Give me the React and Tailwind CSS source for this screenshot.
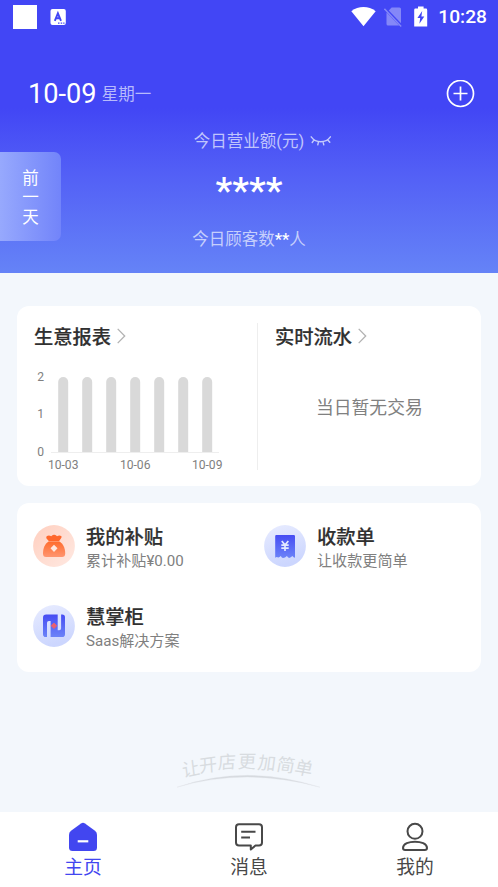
import React from 'react';

function StatusBar() {
  return (
    <div className="flex h-[34px] items-center justify-between pl-[13px] pr-[11px] text-white">
      <div className="flex items-center gap-[13px]">
        <div className="h-6 w-6 bg-white" />
        <svg width="17" height="17" viewBox="0 0 17 17">
          <rect x="0.5" y="0" width="15.3" height="16" rx="2" fill="#fff" />
          <path d="M4.8 11.8 7.9 4.3 11 11.8M5.8 9.2H10" fill="none" stroke="#4246f5" strokeWidth="1.9" />
          <path d="M8 14.2h1.5M10.7 14.2h1.5M13.2 14.2h1.3" stroke="#4246f5" strokeWidth="1.2" />
        </svg>
      </div>
      <div className="flex items-center">
        <svg width="25" height="20" viewBox="0 0 25 20">
          <path d="M12.5 19.3.3 4.3Q5.8.1 12.5.1T24.7 4.3Z" fill="#fff" />
        </svg>
        <svg className="ml-2" width="18" height="20" viewBox="0 0 18 20">
          <path d="M7.6.5H15.5Q17 .5 17 2V17Q17 18.5 15.5 18.5H4Q2.5 18.5 2.5 17V6Z" fill="#8487f8" />
          <path d="M.6 1.2 17.4 18.8" stroke="#4246f5" strokeWidth="3" />
          <path d="M.4 1.8 17.2 19.4" stroke="#8487f8" strokeWidth="1.4" />
        </svg>
        <svg className="-mt-[1px] ml-3" width="14" height="21" viewBox="0 0 14 21">
          <path d="M4 .5H9.6V2.6H12Q13.2 2.6 13.2 4V20.5H.2V4Q.2 2.6 1.4 2.6H4Z" fill="#fff" />
          <path d="M8.2 5 3.4 12H6.2L5.4 17.8 10.3 10.4H7.4Z" fill="#4246f5" />
        </svg>
        <span className="ml-[10px] text-[19.2px] leading-5 font-medium">10:28</span>
      </div>
    </div>
  );
}

function ClosedEye() {
  return (
    <svg width="22" height="12" viewBox="0 0 22 12" fill="none" stroke="#c5cbfc" strokeWidth="1.4" strokeLinecap="round">
      <path d="M1.2 1.8Q4.8 6.7 10.8 6.7T20.4 1.8M4.1 4.8 2.2 7.5M8.5 6.6 7.8 9.9M13 6.6 13.8 9.9M17.5 4.7 19.8 7.3" />
    </svg>
  );
}

function Header() {
  return (
    <header className="relative h-[273px] bg-[linear-gradient(180deg,#4246f5_0px,#4246f5_108px,#5360f6_175px,#6583f7_273px)]">
      <StatusBar />
      <div className="mt-[42px] flex h-9 items-center justify-between pl-7 pr-[23px]">
        <div className="flex items-center gap-[5px]">
          <span className="text-[27.2px] leading-9 text-white">10-09</span>
          <span className="pt-[1px] text-[16.5px] leading-9 text-[#b7bafc]">星期一</span>
        </div>
        <svg width="29" height="29" viewBox="0 0 29 29" fill="none" stroke="#fff">
          <circle cx="14.5" cy="13.5" r="13" strokeWidth="1.7" />
          <path d="M7.5 13.5h14M14.5 6.5v14" strokeWidth="1.7" />
        </svg>
      </div>
      <div className="mt-[17px] flex flex-col items-center">
        <div className="flex h-6 items-center gap-[6px] pl-7 text-[16.5px] text-[#c0c5fc]">
          <span className="pt-[3px]">今日营业额(元)</span>
          <ClosedEye />
        </div>
        <div className="mt-[17px] h-10 text-[37.8px] leading-10 font-medium text-white">****</div>
        <div className="mt-[18px] h-6 text-[16.5px] leading-6 text-[#c6cffc]">
          今日顾客数<span className="font-medium text-white">**</span>人
        </div>
      </div>
      <button className="absolute top-[152px] left-0 flex h-[89px] w-[61px] flex-col items-center justify-center rounded-r-[7px] bg-[linear-gradient(90deg,#97a9fd,#7284fa)] pt-[3px] text-[16.5px] leading-[19.5px] text-white">
        <span>前</span>
        <span>一</span>
        <span>天</span>
      </button>
    </header>
  );
}

function Heading({ children }) {
  return (
    <h2 className="flex h-7 items-center gap-[6px] text-[19.3px] font-medium text-[#303030] [-webkit-text-stroke:0.2px_#303030]">
      <span className="pt-1">{children}</span>
      <svg width="9" height="16" viewBox="0 0 9 16" fill="none" stroke="#b2b2b2" strokeWidth="1.3">
        <path d="M.7.9 7.7 8 .7 15.1" />
      </svg>
    </h2>
  );
}

const days = ['10-03', '', '', '10-06', '', '', '10-09'];

function Chart() {
  return (
    <svg className="mt-4" width="200" height="110" viewBox="34 366 200 110" fontSize="12.1" fill="#808080">
      <path d="M51 452.5H219" stroke="#eeeeee" />
      {[2, 1, 0].map((n, i) => (
        <text key={n} x="37.3" y={380.8 + i * 37.4}>{n}</text>
      ))}
      {days.map((day, i) => (
        <g key={i}>
          <path d={`M${58.2 + i * 24} 452V382a5 5 0 0 1 10 0V452Z`} fill="#d9d9d9" />
          <text x={63.2 + i * 24} y="469" textAnchor="middle">{day}</text>
        </g>
      ))}
    </svg>
  );
}

function Reports() {
  return (
    <section className="mx-[17px] mt-[33px] flex h-[180px] rounded-xl bg-white py-4">
      <div className="w-[240px] pl-[17px]">
        <Heading>生意报表</Heading>
        <Chart />
      </div>
      <div className="mt-[1px] h-[147px] w-px bg-[#eeeeee]" />
      <div className="flex-1 pl-[17px]">
        <Heading>实时流水</Heading>
        <p className="mt-[44px] pl-[41px] text-[17.8px] leading-7 text-[#808080]">当日暂无交易</p>
      </div>
    </section>
  );
}

function SubsidyIcon() {
  return (
    <svg width="42" height="42" viewBox="0 0 42 42">
      <defs>
        <linearGradient id="peach" x1="0" y1="0" x2="1" y2="1">
          <stop stopColor="#ffcfbf" />
          <stop offset="1" stopColor="#ffe9e2" />
        </linearGradient>
        <linearGradient id="orange" x1="0" y1="0" x2="0" y2="1">
          <stop stopColor="#ff6c2d" />
          <stop offset="1" stopColor="#ff9570" />
        </linearGradient>
      </defs>
      <circle cx="21" cy="21" r="20.9" fill="url(#peach)" />
      <path d="M15.5 16.4h11C30 18.5 32.2 22.7 32.2 28.5Q32.2 32 29 32H13Q10 32 10 28.5C10 22.7 12.2 18.5 15.5 16.4Z" fill="url(#orange)" />
      <path d="M14 10.9Q16.4 10.2 18.2 11.2 19.4 9.5 21.1 9.7 22.9 9.5 24 11.2 26 10.2 28.2 10.9 29.3 11.7 27.9 13.4L26 16.3H16L13.5 13.4Q12.7 11.7 14 10.9Z" fill="#ff672c" />
      <path d="M21 19.7 24.5 23.3 21 26.9 17.5 23.3Z" fill="#ffe7df" />
    </svg>
  );
}

function BlueDisc({ id, children }) {
  return (
    <svg width="42" height="42" viewBox="0 0 42 42">
      <defs>
        <linearGradient id={id + 'Disc'} x1="0" y1="0" x2="0.3" y2="1">
          <stop stopColor="#e8ecff" />
          <stop offset="1" stopColor="#ccd6fe" />
        </linearGradient>
        <linearGradient id={id + 'Mark'} x1="0" y1="0" x2="0" y2="1">
          <stop stopColor="#464cf3" />
          <stop offset="1" stopColor="#6b83f8" />
        </linearGradient>
      </defs>
      <circle cx="21" cy="21" r="20.9" fill={`url(#${id}Disc)`} />
      {children}
    </svg>
  );
}

function ReceiptIcon() {
  return (
    <BlueDisc id="receipt">
      <path d="M12.2 10H29.8Q31 10 31 11.2V32.7Q29.5 32.7 28.4 31.1 26.8 32.9 25.1 32.9 23.9 32.9 22.9 31.1 21 33 19 33 17.8 33 16.8 31.1 15.2 32.9 14 32.5 12.9 31.2 11.2 32.8V11.2Q11.2 10 12.2 10Z" fill="url(#receiptMark)" />
      <path d="M17.8 16 21 20.1 24.3 16M21 20V26M17.3 20.2H24.7M17.3 23.1H24.7" fill="none" stroke="#e2e8ff" strokeWidth="1.7" />
    </BlueDisc>
  );
}

function StoreIcon() {
  return (
    <BlueDisc id="store">
      <path d="M13.2 9.5H24.7V25.3H26.2Q28.1 25.3 28.1 23.3V9.5H29.2Q32 9.5 32 12.3V29.2Q32 32 29.2 32H17.6V16H15.9Q14 16 14 18V32H12.8Q10 32 10 29.2V12.7Q10 9.5 13.2 9.5Z" fill="url(#storeMark)" />
      <path d="M21 18.1 23.7 20.8 21 23.5 18.3 20.8Z" fill="#e95f70" stroke="#e95f70" strokeLinejoin="round" />
    </BlueDisc>
  );
}

function Service({ icon, title, note }) {
  return (
    <div className="flex items-start gap-[11px]">
      {icon}
      <div>
        <h3 className="h-[25px] text-[19.3px] leading-[26px] font-medium text-[#303030] [-webkit-text-stroke:0.2px_#303030]">{title}</h3>
        <p className="text-[15.1px] leading-[22px] text-[#808080]">{note}</p>
      </div>
    </div>
  );
}

function Services() {
  return (
    <section className="mx-[17px] mt-[17px] grid h-[169px] grid-cols-[231px_1fr] grid-rows-[80px_1fr] rounded-xl bg-white pt-[22px] pl-4">
      <Service icon={<SubsidyIcon />} title="我的补贴" note="累计补贴¥0.00" />
      <Service icon={<ReceiptIcon />} title="收款单" note="让收款更简单" />
      <Service icon={<StoreIcon />} title="慧掌柜" note="Saas解决方案" />
    </section>
  );
}

const slogan = [
  ['让', 191, 769, -12],
  ['开', 208, 765, -8],
  ['店', 227, 762, -3],
  ['更', 247, 761, 0],
  ['加', 267, 763, 3],
  ['简', 286, 765, 6],
  ['单', 304, 768, 9],
];

function Slogan() {
  return (
    <svg className="mx-auto mt-[73px]" width="160" height="48" viewBox="169 745 160 48" fontSize="18" fill="#d8dce0">
      {slogan.map(([char, x, y, angle]) => (
        <text key={char} textAnchor="middle" transform={`translate(${x} ${y}) rotate(${angle}) skewX(-5)`} y="6.5">{char}</text>
      ))}
      <path d="M177 787.2Q246 763.5 320 787.2 246 767 177 787.2Z" fill="#d5d9de" stroke="#e2e6ea" strokeWidth="0.4" />
    </svg>
  );
}

function Tab({ label, active, children }) {
  return (
    <button className={active ? 'flex flex-col items-center pt-[10px] text-[#4246f0]' : 'flex flex-col items-center pt-[10px] text-[#484848]'}>
      <svg width="30" height="31" viewBox="0 0 30 31" fill="none" stroke="currentColor" strokeWidth="2">
        {children}
      </svg>
      <span className="pt-[2px] text-[18.8px] leading-[26px]">{label}</span>
    </button>
  );
}

function TabBar() {
  return (
    <nav className="grid h-[75px] grid-cols-3 bg-white">
      <Tab label="主页" active>
        <path d="M13 1.4Q15 .2 17 1.4L27 8.8Q29 10.4 29 12.7V25.5Q29 29 25.5 29H4.5Q1 29 1 25.5V12.7Q1 10.4 3 8.8Z" fill="currentColor" stroke="none" />
        <path d="M9.7 19.3H20.3" stroke="#fff" strokeWidth="2.2" />
      </Tab>
      <Tab label="消息">
        <path d="M5 2.3H25Q28 2.3 28 5.3V20.5Q28 23.5 25 23.5H21.5L16.8 27.5V23.5H5Q2 23.5 2 20.5V5.3Q2 2.3 5 2.3Z" strokeLinejoin="round" />
        <path d="M7.2 9.7H21.5M7.2 15.4H16" />
      </Tab>
      <Tab label="我的">
        <circle cx="15" cy="9.3" r="7.5" />
        <path d="M15 19.7C20.8 19.7 27 21.6 27 26Q27 28 24.8 28H5.2Q3 28 3 26C3 21.6 9.2 19.7 15 19.7Z" />
      </Tab>
    </nav>
  );
}

export default function App() {
  return (
    <div className="flex h-[887px] w-[498px] flex-col overflow-hidden bg-[#f3f7fc] font-['Roboto','Noto_Sans_CJK_SC',sans-serif]">
      <Header />
      <Reports />
      <Services />
      <Slogan />
      <div className="mt-auto">
        <TabBar />
      </div>
    </div>
  );
}
